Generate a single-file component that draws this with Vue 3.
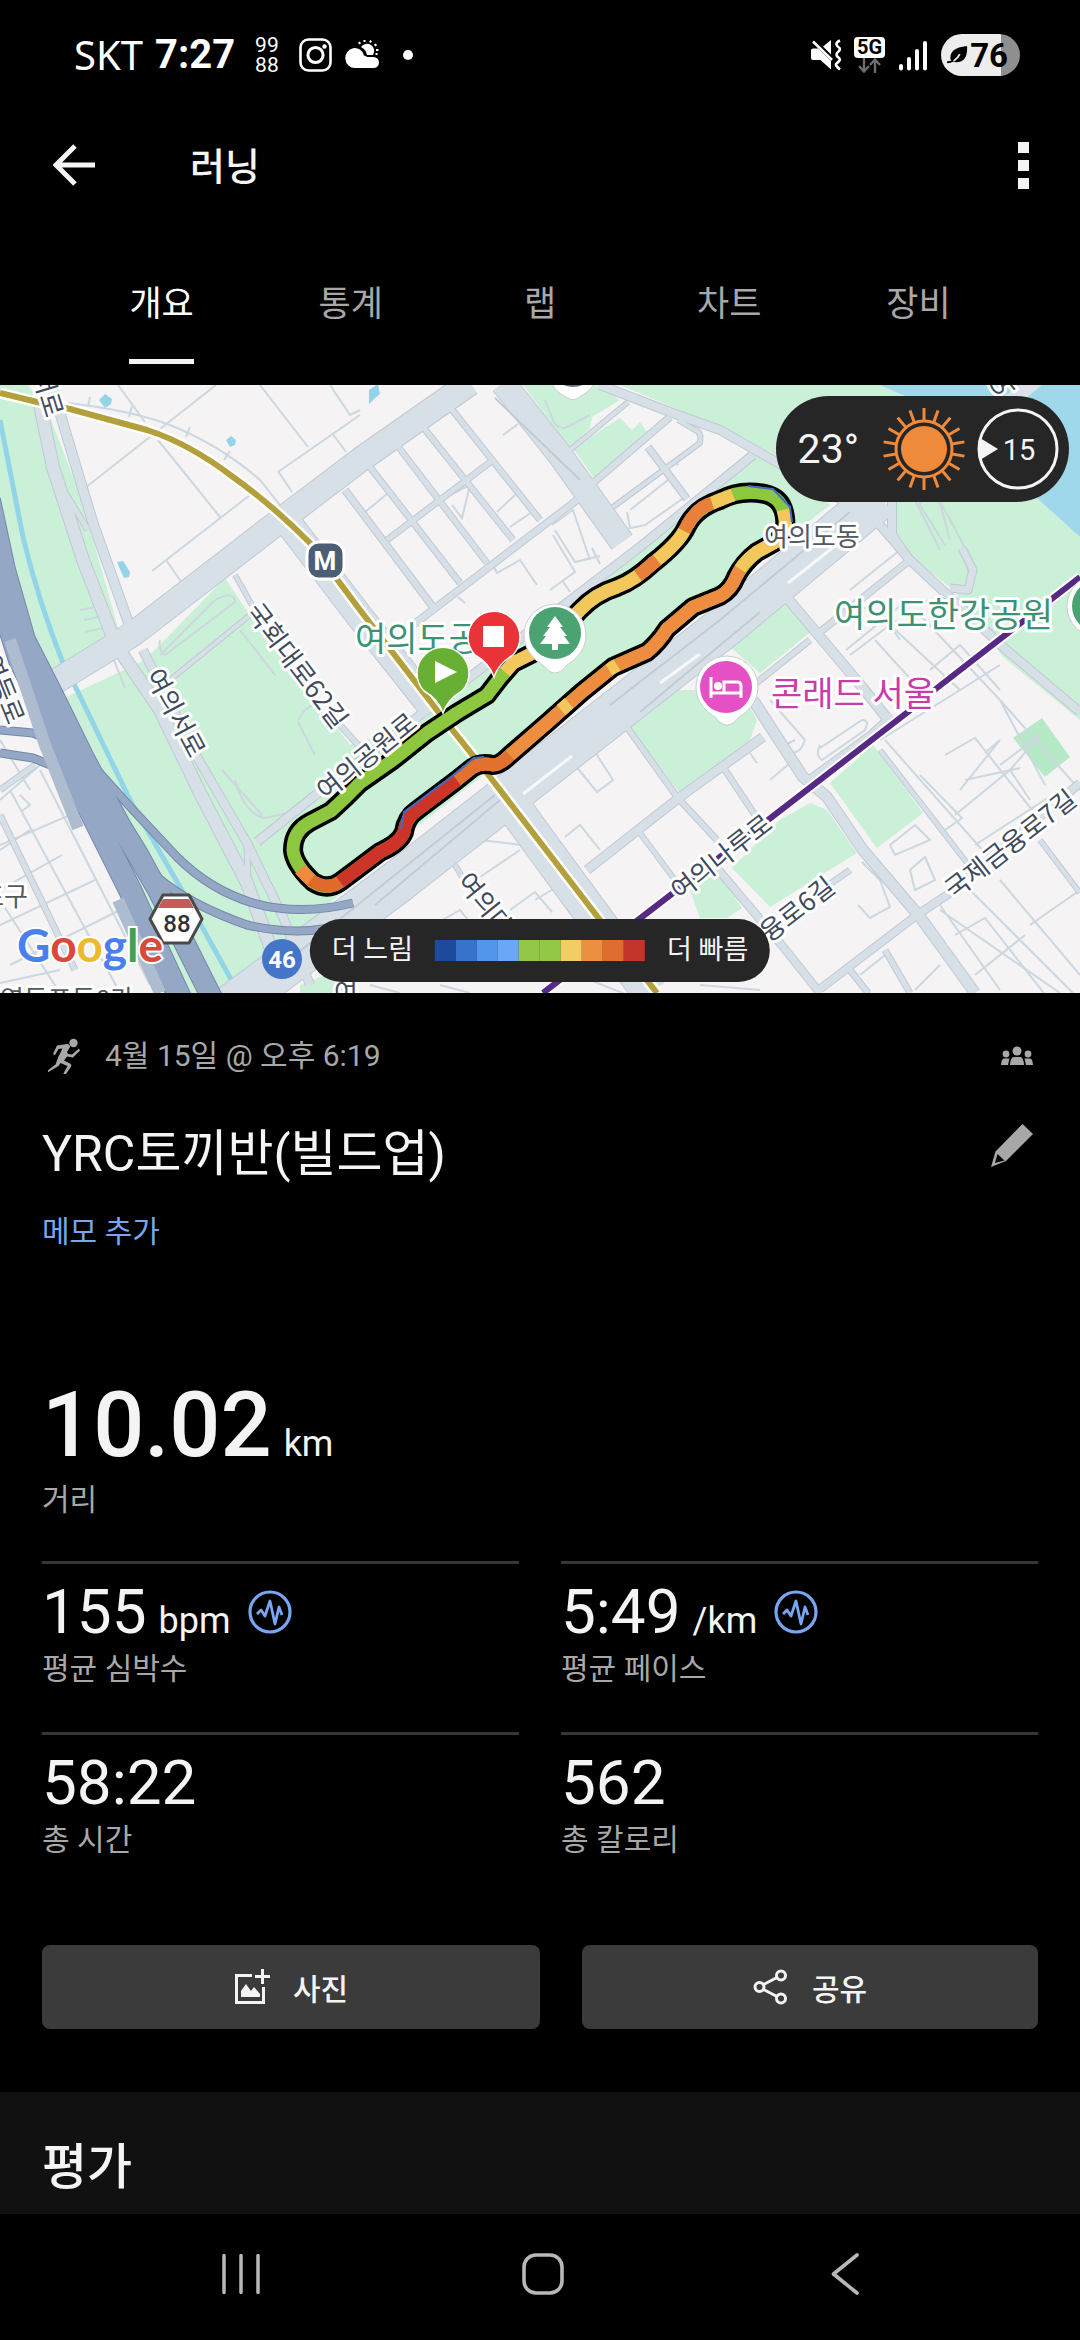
<template>
  <div class="screen">
    <div class="status-bar">
      <div class="status-left">
        <span class="carrier">SKT</span>
        <span class="clock">7:27</span>
        <span class="app-badge"><span>99</span><span>88</span></span>
        <svg class="icon-34" viewBox="0 0 34 34" fill="none" stroke="#fff">
          <rect x="1.5" y="1.5" width="30" height="31" rx="8" stroke-width="2.6" />
          <circle cx="16.5" cy="17" r="7.6" stroke-width="3" />
          <circle cx="25.5" cy="8.5" r="2.2" fill="#fff" stroke="none" />
        </svg>
        <svg class="icon-34" viewBox="0 0 34 34">
          <g stroke="#fff" stroke-width="2">
            <path d="M15 6l-1-2M19.500 4V2M25 4.500l1-2M29.500 7.500l2-1M31 12h2.500M30.500 16h2" />
          </g>
          <path d="M16 9a7 7 0 0 1 12 8h-6a11 11 0 0 0-6-8z" fill="#fff" />
          <path d="M10 30a9.500 10 0 1 1 9-12.500l3.500 1.500h6a5.500 5.500 0 0 1 0 11z" fill="#fff" />
        </svg>
        <span class="dot"></span>
      </div>
      <div class="status-right">
        <svg class="icon-32" viewBox="0 0 32 32">
          <path d="M1 11.500q0-2 2-2h5L21 22v8.500L10.500 21H3q-2 0-2-2zM13 7.500L21 1v14.500z" fill="#fff" />
          <path d="M3 2.500L22 21" stroke="#fff" stroke-width="2.600" />
          <path d="M30 1.500q-4 2-3.500 4t3 3.500q1 2-1 3.500t-2 3 2 3 1 3-3 3 3.500 6" stroke="#fff" stroke-width="2.600" fill="none" />
        </svg>
        <span class="network">
          <span class="network-type">5G</span>
          <svg viewBox="0 0 24 15" fill="none" stroke="#6d6d6d" stroke-width="2.400">
            <path d="M6 0v13M1 8l5 5.500L11 8M17 15V2M12 7l5-5.500L22 7" />
          </svg>
        </span>
        <svg class="icon-32" viewBox="0 0 32 32" stroke="#fff" stroke-width="4" stroke-linecap="round">
          <path d="M4 27v2.500M12 20v9.500M20 12v17.500" />
          <path d="M28 4v25.500" />
        </svg>
        <span class="battery">
          <svg viewBox="0 0 24 22">
            <path d="M4 17Q1 3 22 1q1 18-12 18-2 0-4-1z" />
            <path d="M1 19q8 0 13-9" stroke="#eee" stroke-width="2" fill="none" />
            <path d="M0 19q4 0 7-2" stroke="#000" stroke-width="2" fill="none" />
          </svg>
          <span>76</span>
        </span>
      </div>
    </div>

    <header class="app-bar">
      <button class="icon-button" aria-label="뒤로">
        <svg class="icon-42" viewBox="0 0 42 42" fill="none" stroke="#f4f4f4" stroke-width="5">
          <path d="M42 21H4M22 2L3 21l19 19" />
        </svg>
      </button>
      <h1>러닝</h1>
      <button class="icon-button menu" aria-label="더보기">
        <i></i><i></i><i></i>
      </button>
    </header>

    <nav class="tabs">
      <button
        v-for="tab in tabs"
        :key="tab"
        class="tab"
        :class="{ active: tab === activeTab }"
        @click="activeTab = tab"
      >
        <span>{{ tab }}</span>
      </button>
    </nav>

    <section class="map">
      <svg class="map-canvas" viewBox="0 385 1080 608">
        <rect y="385" width="1080" height="608" fill="#f5f3f4" />

        <!-- parks and water -->
        <g fill="#caf0d7">
          <path v-for="d in parks" :key="d" :d="d" />
        </g>
        <path d="M1013 738L1042 718L1070 757L1045 777z" fill="#b6eac6" />
        <path d="M880 385H1080V537L1000 465L925 405z" fill="#9fd8ea" />
        <path d="M985 410L1020 385h22L1005 415z" fill="#dde2ea" />
        <path
          d="M0 420L23 537Q38 600 63 663L77 690L130 800L180 887L233 983L240 993"
          fill="none"
          stroke="#92d5e8"
          stroke-width="5"
        />
        <g fill="#92d5e8">
          <path d="M99 400l6-6 7 5-1 5-6 4zM226 440l5-4 5 4-1 5-5 2zM117 562l6-1 7 11-1 5-5 1zM369 390l9-6 2 10-6 5-5 5z" />
        </g>

        <!-- thin lanes -->
        <g fill="none" stroke="#ccd7df" stroke-width="2">
          <path v-for="d in lanes" :key="d" :d="d" />
        </g>

        <!-- streets: edge pass, then fill pass -->
        <g fill="none" stroke="#bfc9d5" stroke-linejoin="round">
          <path v-for="r in roads" :key="r.d" :d="r.d" :stroke-width="r.w + 2" />
        </g>
        <g fill="none" stroke="#d8e0e7" stroke-linejoin="round">
          <path v-for="r in roads" :key="r.d" :d="r.d" :stroke-width="r.w" />
        </g>
        <g fill="none" stroke="#c2cad5" stroke-width="2">
          <path d="M280 967L495 795M610 705L720 620L850 512M375 905L500 800M640 712L760 612M495 398L580 480" />
        </g>
        <g fill="none" stroke="#f7f8fa" stroke-width="3">
          <path d="M523 794L572 756M660 683L700 654M788 583L840 542" />
        </g>

        <!-- expressways -->
        <g fill="none" stroke="#7388ab" stroke-linejoin="round">
          <path v-for="r in highways" :key="r.d" :d="r.d" :stroke-width="r.w + 2" />
        </g>
        <g fill="none" stroke="#94a7c4" stroke-linejoin="round">
          <path v-for="r in highways" :key="r.d" :d="r.d" :stroke-width="r.w" />
        </g>
        <path d="M10 640L45 745L78 828M118 900L160 993" fill="none" stroke="#aebccf" stroke-width="12" />

        <!-- subway lines -->
        <path :d="line9" fill="none" stroke="#fff" stroke-width="11" />
        <path :d="line9" fill="none" stroke="#b3a03c" stroke-width="6" />
        <path :d="line5" fill="none" stroke="#fff" stroke-width="10" />
        <path :d="line5" fill="none" stroke="#562984" stroke-width="6" />

        <!-- street names -->
        <g class="map-label street">
          <text text-anchor="end" transform="translate(46 419) rotate(73)">여의서로</text>
          <text transform="translate(245 612) rotate(53)">국회대로62길</text>
          <text transform="translate(145 675) rotate(62)">여의서로</text>
          <text text-anchor="end" transform="translate(8 726) rotate(68)">영등로</text>
          <text transform="translate(456 882) rotate(51)">여의대로</text>
          <text transform="translate(680 901) rotate(-38)">여의나루로</text>
          <text transform="translate(769 943) rotate(-38)">융로6길</text>
          <text transform="translate(954 900) rotate(-38)">국제금융로7길</text>
          <text transform="translate(998 400) rotate(-38)">여</text>
          <text x="334" y="1002">여</text>
        </g>
        <g class="map-label district">
          <text x="28" y="906" text-anchor="end">영등포구</text>
          <text x="0" y="1009">영등포동8가</text>
        </g>
        <g class="map-label poi">
          <text x="355" y="651">여의도공원</text>
          <text x="834" y="627">여의도한강공원</text>
          <text x="771" y="706" class="hotel">콘래드 서울</text>
        </g>

        <!-- recorded track -->
        <path :d="track" fill="none" stroke="#000" stroke-width="20" stroke-linejoin="round" />
        <path :d="track" fill="none" stroke="#8dc63f" stroke-width="13" stroke-linejoin="round" />
        <g fill="none" stroke-width="13" stroke-linejoin="round">
          <path v-for="s in segments" :key="s.d" :d="s.d" :stroke="s.color" />
        </g>
        <path
          d="M401 829L404 812L451 777L474 758L484 757M748 486L773 489L790 507L792 522"
          fill="none"
          stroke="#3b6fc6"
          stroke-width="2"
        />
        <g class="map-label street">
          <text transform="translate(326 801) rotate(-39)">여의공원로</text>
        </g>
        <g class="map-label district">
          <text x="764" y="546">여의도동</text>
        </g>

        <!-- badges -->
        <rect x="307" y="542" width="37" height="37" rx="12" fill="#4c5e73" stroke="#fff" stroke-width="3" />
        <text x="325" y="570" class="badge-m">M</text>
        <path d="M163 895h26l13 24-13 24h-26l-13-24z" fill="#fff" stroke="#4a4a4a" stroke-width="3" stroke-linejoin="round" />
        <path d="M163 899h26l5 9h-36z" fill="#c95a5a" />
        <text x="177" y="932" class="badge-88">88</text>
        <circle cx="282" cy="959" r="20" fill="#4575c9" />
        <text x="282" y="968" class="badge-46">46</text>
        <text x="17" y="962" class="google">
          <tspan fill="#4a80ee">G</tspan><tspan fill="#d9483b">o</tspan><tspan fill="#efb92e">o</tspan><tspan fill="#4a80ee">g</tspan><tspan fill="#3da256">l</tspan><tspan fill="#d9483b">e</tspan>
        </text>

        <!-- pins -->
        <g stroke="#c9ced3">
          <path d="M548 375Q553 391 566 397Q573 403 581 396Q594 389 598 375z" fill="#fff" />
          <circle cx="573" cy="362" r="25" fill="#6d747c" stroke="none" />
          <path d="M555 673q-6 0-12-8-8-4-14-13a31 31 0 1 1 52 0q-6 9-14 13-6 8-12 8z" fill="#fff" />
          <path d="M727 725q-6 0-12-8-8-4-14-13a31 31 0 1 1 52 0q-6 9-14 13-6 8-12 8z" fill="#fff" />
          <circle cx="1098" cy="606" r="31" fill="#fff" />
        </g>
        <circle cx="1098" cy="606" r="26" fill="#4ba374" />
        <circle cx="555" cy="633" r="26" fill="#4ba374" />
        <path d="M555 616l8 11h-3l7 9h-3l6 8h-12v6h-6v-6h-12l6-8h-3l7-9h-3z" fill="#fff" />
        <circle cx="726" cy="687" r="26" fill="#e650c5" />
        <path d="M711 677v21M711 693h30M741 698v-12q0-4-4-4h-13v10" fill="none" stroke="#fff" stroke-width="3" />
        <circle cx="718" cy="686" r="4" fill="#fff" />
        <path d="M494 677q-5-14-19-22a26 26 0 1 1 38 0q-14 8-19 22z" fill="#ea3338" stroke="#fff" stroke-width="1.500" />
        <rect x="483" y="626" width="21" height="21" fill="#fff" />
        <path d="M443 713q-5-14-19-22a26 26 0 1 1 38 0q-14 8-19 22z" fill="#68b034" stroke="#fff" stroke-width="1.500" />
        <path d="M435 661v22l22-11z" fill="#fff" />
      </svg>

      <div class="weather">
        <span class="temperature">23°</span>
        <svg class="weather-icon" viewBox="-41 -41 82 82">
          <g stroke="#ef8a3a" stroke-width="3">
            <path v-for="n in 18" :key="n" d="M0 -27V-41" :transform="`rotate(${n * 20})`" />
          </g>
          <circle r="28" fill="#262626" stroke="#ef8a3a" stroke-width="3" />
          <circle r="23" fill="#ef8a3a" />
        </svg>
        <svg class="weather-icon" viewBox="-41 -41 82 82">
          <circle r="39" fill="none" stroke="#f4f4f4" stroke-width="3" />
          <path d="M-38 -11L-20 0L-38 11z" fill="#f4f4f4" />
          <text x="1" y="11" class="wind">15</text>
        </svg>
      </div>

      <div class="legend">
        <span>더 느림</span>
        <div class="scale">
          <i v-for="(color, i) in scale" :key="i" :style="{ background: color }"></i>
        </div>
        <span>더 빠름</span>
      </div>
    </section>

    <main class="activity">
      <div class="meta">
        <svg class="runner" viewBox="0 0 32 36" fill="#a8a8a8">
          <circle cx="25.500" cy="5" r="4.200" />
          <path d="M9 7.500l10-1.500q3 0 3 3l-3 5 1 2 4 .5 7-6 1 2-7 7-6-1-3 4 6 3q2 1 1 3l-6 9-2-1 4.500-8.500-7-3-2 3-11 6.500-.5-1.500 8.500-6.500 3-8 4-8-4 .5-3.500 6-2-1z" />
        </svg>
        <span>4월 15일 @ 오후 6:19</span>
        <svg class="group" viewBox="0 0 34 20" fill="#a8a8a8">
          <circle cx="17" cy="5" r="4.500" />
          <circle cx="6" cy="8" r="3.400" />
          <circle cx="28" cy="8" r="3.400" />
          <path d="M10 19q.5-8 4-8h6q3.500 0 4 8zM1 19q.5-6.500 3-6.500h5.500L8 19zM33 19q-.5-6.500-3-6.500h-5.500L26 19z" />
        </svg>
      </div>

      <div class="title-row">
        <h2>YRC토끼반(빌드업)</h2>
        <button class="icon-button" aria-label="이름 편집">
          <svg class="pencil" viewBox="0 0 44 44">
            <path d="M32.500 0L43 10 16 37 1 43 5.500 27.500z" fill="#a8a8a8" />
            <path d="M7.500 30l7 6.500-9.500 2.500z" fill="#000" />
          </svg>
        </button>
      </div>
      <a href="#" class="memo">메모 추가</a>

      <div class="distance">
        <div class="value-row">
          <strong>10.02</strong>
          <span class="unit">km</span>
        </div>
        <span class="label">거리</span>
      </div>

      <div class="stats">
        <div v-for="stat in stats" :key="stat.label" class="stat">
          <div class="value-line">
            <div class="value-row">
              <span class="value">{{ stat.value }}</span>
              <span v-if="stat.unit" class="unit">{{ stat.unit }}</span>
            </div>
            <svg v-if="stat.unit" class="pulse" viewBox="0 0 44 44" fill="none" stroke="#78a6f2">
              <circle cx="22" cy="22" r="20" stroke-width="3.200" />
              <path d="M9 24l4-4 4 6 5-15 5 23 4-17 3 8" stroke-width="2.800" stroke-linejoin="round" />
            </svg>
          </div>
          <span class="label">{{ stat.label }}</span>
        </div>
      </div>

      <div class="actions">
        <button class="action photo">
          <svg viewBox="0 0 36 36" fill="none" stroke="#f4f4f4" stroke-width="3">
            <path d="M18 6.500H2.500v27h27V18M28.500 0v15M21 7.500h15" />
            <path d="M7 28v-6l5-7 5 7 3-4 6 7v3z" fill="#f4f4f4" stroke="none" />
          </svg>
          <span>사진</span>
        </button>
        <button class="action share">
          <svg viewBox="0 0 36 36" fill="none" stroke="#f4f4f4" stroke-width="3">
            <circle cx="6.500" cy="18" r="4.500" />
            <circle cx="28" cy="6.500" r="4.500" />
            <circle cx="28" cy="29.500" r="4.500" />
            <path d="M10.500 15.500L24 8.500M10.500 20.500L24 27.500" />
          </svg>
          <span>공유</span>
        </button>
      </div>
    </main>

    <section class="rating">
      <h2>평가</h2>
    </section>

    <footer class="nav-bar">
      <button class="icon-button" aria-label="최근 앱">
        <svg class="icon-42" viewBox="0 0 42 42" stroke="#b8b8b8" stroke-width="3.500" stroke-linecap="round">
          <path d="M4 2.500v37M21 2.500v37" />
          <path d="M38 2.500v37" />
        </svg>
      </button>
      <button class="icon-button" aria-label="홈">
        <svg class="icon-42" viewBox="0 0 42 42" fill="none" stroke="#b8b8b8" stroke-width="3.600">
          <rect x="2" y="2" width="38" height="38" rx="12" />
        </svg>
      </button>
      <button class="icon-button" aria-label="뒤로 가기">
        <svg class="icon-42" viewBox="0 0 42 42" fill="none" stroke="#b8b8b8" stroke-width="3.600" stroke-linecap="round" stroke-linejoin="round">
          <path d="M33 2L9.500 21 33 40" />
        </svg>
      </button>
    </footer>
  </div>
</template>

<script setup>
import { ref } from "vue";

const tabs = ["개요", "통계", "랩", "차트", "장비"];
const activeTab = ref("개요");

const stats = [
  { value: "155", unit: "bpm", label: "평균 심박수" },
  { value: "5:49", unit: "/km", label: "평균 페이스" },
  { value: "58:22", unit: "", label: "총 시간" },
  { value: "562", unit: "", label: "총 칼로리" },
];

const scale = [
  "#1c4b9c",
  "#3772cb",
  "#5296ec",
  "#6aa8f7",
  "#92c846",
  "#92c846",
  "#f1cd63",
  "#eb8f41",
  "#de6d2f",
  "#c1352b",
];

const parks = [
  "M0 385H28L50 417L82 500L118 628L50 690L60 700L145 660L225 578L245 608L350 745L420 722L753 452L790 470L830 505L400 840L230 993H170L0 600z",
  "M523 385H600L620 400L592 417L590 428L570 448z",
  "M573 448L620 418L632 430L640 422L648 434L594 478z",
  "M620 385H885L960 430L1080 537V720L1003 657L953 590L897 545L893 500L850 500L770 452L720 427z",
  "M730 647L787 603L813 630L760 673z",
  "M627 727L672 690H740L757 720L750 740L680 793z",
  "M830 783L873 745L923 813L877 848z",
  "M732 868L780 820L810 803L827 810L857 853L770 907z",
  "M690 890L718 872L742 908L727 918L700 918z",
  "M300 985L325 975L350 993H300z",
];

const lanes = [
  "M68 403Q130 410 170 425Q220 445 260 480L280 505",
  "M118 385L145 422M158 440L220 517M216 385L85 488M260 385L308 447M330 385L350 415L360 410M278 472L360 415M152 571L250 495M166 560L182 583M332 433L346 452M278 471L292 492",
  "M90 397l-2 10M132 406l-3 11M190 427l-4 10M230 451l-6 9",
  "M160 655L215 600Q235 590 235 602L165 655Q158 650 160 640M240 630L275 675M112 655L125 688M80 610L100 606M84 620L102 616M85 632L104 628",
  "M545 400L553 420Q556 428 565 428L590 415M503 435L518 424M365 512L387 494M450 495L470 485L462 518L452 505M497 512L515 495M510 527L532 512M552 525L573 510L590 560M592 548l8 16M555 530L575 562L600 556",
  "M493 565L497 573L520 560L537 585M550 590L575 572L553 535M458 597L465 603M562 580L570 592",
  "M627 512L630 528L645 525L688 495M675 462L678 465M668 480L630 510",
  "M915 440L920 505L945 545M925 448L950 540M905 480L940 550M900 440Q930 480 965 548L970 590",
  "M760 540l8 14 14-9M850 590L900 550M845 600L905 625",
  "M846 650L905 602L940 600M875 640L925 695M890 625L960 690M920 615L1000 700M880 610L900 640M850 655L890 625M930 670L960 645L1000 690",
  "M575 765L597 792L613 780L595 752M565 837L580 825L600 850M520 850L480 877M480 840L522 845M510 910L535 892L552 912M535 900L560 885",
  "M820 745Q815 755 822 760L865 730Q870 720 862 720L820 748M770 700L805 740Q800 755 790 752L755 710M885 740L1000 870M945 755L975 738L1040 820M985 753L1000 740L960 790M965 780L1020 768M1000 765L1040 735L1010 770",
  "M880 740L1000 665M1000 700L1045 785M920 775L962 818L945 830M955 815L1010 770L1030 800M975 845L1060 790M1000 700L1080 790",
  "M770 780L790 763M750 753L757 763M785 745L795 740",
  "M890 845L915 825L930 840L895 855zM910 870L925 857L935 880L915 890z",
  "M940 910L1060 993M960 880L1080 1000M955 935L985 918L1065 1020M1000 880L1080 975M1030 925L1080 890M975 975L1025 935M940 905L1000 990M915 990L940 965",
  "M858 905L870 918L890 907L880 880L862 862M860 975L885 955M855 975L870 993",
  "M0 800L40 765M0 845L105 800M10 790L120 993M40 770L150 985M0 925L95 880M10 965L130 905M0 740L30 790M20 795l10 10-8 6M62 855L0 890M60 993L0 900M30 830L0 850",
  "M390 950L460 910L500 960M540 960L640 1000M700 985L760 990M370 985L400 993M440 985L470 993M0 983L60 970",
  "M235 780Q245 815 265 818L300 810M298 720L305 710L320 700M298 722L315 755M222 770L262 815",
];

const roads = [
  { w: 5, d: "M450 407L540 520" },
  { w: 5, d: "M423 427L513 540" },
  { w: 5, d: "M397 445L487 563" },
  { w: 5, d: "M370 467L460 583" },
  { w: 6, d: "M345 490L433 607" },
  { w: 5, d: "M387 540L493 460" },
  { w: 6, d: "M413 625L577 500" },
  { w: 6, d: "M593 483L670 417" },
  { w: 6, d: "M648 447L687 499" },
  { w: 4, d: "M613 507L700 443Q702 432 695 430L678 420" },
  { w: 4, d: "M570 450L628 402" },
  { w: 8, d: "M600 385L670 412L720 430L773 460L850 505" },
  { w: 8, d: "M257 842L313 797L640 547L753 455" },
  { w: 12, d: "M40 405L53 467L83 560L116 645L160 710L200 793L247 883L275 960" },
  { w: 5, d: "M48 465L88 530" },
  { w: 9, d: "M52 385L62 420L93 523L130 627" },
  { w: 8, d: "M143 650L197 757L247 843L283 917L310 985" },
  { w: 5, d: "M247 845L248 885L275 955" },
  { w: 4, d: "M235 575L252 605M170 680L250 615" },
  { w: 5, d: "M340 725L358 745" },
  { w: 24, d: "M45 688L133 634L273 526L360 460L470 383" },
  { w: 26, d: "M280 512L360 617L430 705" },
  { w: 24, d: "M503 383L560 455L622 542" },
  { w: 42, d: "M215 1018L400 880L560 755L720 630L880 497" },
  { w: 34, d: "M505 795L545 850L600 925L650 993" },
  { w: 9, d: "M783 593L863 688L890 722" },
  { w: 8, d: "M867 510L910 560L1003 647L1080 712" },
  { w: 8, d: "M892 500L892 535L908 558" },
  { w: 7, d: "M950 588L968 590L973 570L962 548" },
  { w: 6, d: "M820 632L910 560" },
  { w: 5, d: "M720 712L810 640" },
  { w: 10, d: "M753 700L803 777L827 797L863 850L920 917L975 993" },
  { w: 6, d: "M808 780L870 735L892 715" },
  { w: 8, d: "M587 870L680 797L763 737" },
  { w: 5, d: "M627 727L677 797L717 840M723 767L765 830" },
  { w: 7, d: "M710 860L780 943L820 993" },
  { w: 4, d: "M640 833L675 880M455 865L470 890" },
  { w: 7, d: "M820 989L917 915L947 895L1080 783" },
  { w: 4, d: "M880 750L967 863M1040 840L1080 893" },
  { w: 5, d: "M850 870L800 905M885 950L910 993M850 970L868 993" },
  { w: 5, d: "M0 790L35 765M0 815L75 970" },
];

const highways = [
  { w: 7, d: "M0 753L33 758L63 770L97 793Q130 820 157 877Q190 905 247 925Q290 935 330 928" },
  { w: 7, d: "M0 730L33 733L67 747L97 770L133 810L177 857Q210 890 253 903Q300 916 353 903" },
  { w: 22, d: "M-12 560L20 660L35 690L60 750L100 830L130 890L180 998" },
  { w: 20, d: "M-10 500L5 570L25 640L53 695L85 760L120 825L158 890L212 998" },
];

const line9 =
  "M0 393L37 402L70 409L147 430Q190 444 233 477Q270 503 310 543L360 610L443 718L490 777L600 920L657 993";
const line5 = "M1080 577L937 688L908 712L768 820L638 920L543 993";

const track =
  "M487 695L457 713L427 733L393 760L360 783L346 797L331 811L310 822Q293 831 293 850Q294 864 313 882Q327 891 340 882L360 867L380 852Q400 843 404 832Q406 818 416 811L457 780L472 768Q480 762 493 765Q500 765 510 755L547 723L582 692L613 667L647 652Q658 643 667 629L693 607L720 596Q731 590 736 577Q744 562 757 552L777 541Q787 532 785 518Q783 498 765 494Q740 489 720 500Q696 508 687 526Q680 542 653 563Q635 580 617 587Q595 594 580 610L545 647L513 663L500 678Z";

const segments = [
  { color: "#f08a3e", d: "M300 869Q306 876 313 882" },
  { color: "#df6a2b", d: "M311 880Q327 891 340 882" },
  { color: "#cd3427", d: "M340 882L360 867L380 852Q400 843 404 832Q406 818 416 811L457 780" },
  { color: "#e2702f", d: "M457 780L472 768Q480 762 493 765Q500 765 510 755" },
  { color: "#ee8d40", d: "M510 755L547 723L582 692L613 667L647 652Q658 643 667 629L693 607L720 596Q731 590 736 577L740 569" },
  { color: "#f2c75b", d: "M561 710L569 703M609 670L617 665" },
  { color: "#f2c75b", d: "M740 569Q746 560 757 552L777 541Q787 532 785 518L783 510" },
  { color: "#f2c75b", d: "M733 495L720 500" },
  { color: "#f2c75b", d: "M722 499Q716 501 711 504" },
  { color: "#e97f38", d: "M712 503Q696 508 687 526L684 531" },
  { color: "#f2c75b", d: "M684 531Q678 543 657 560" },
  { color: "#e97f38", d: "M657 560Q649 567 638 576" },
  { color: "#f2c75b", d: "M638 576Q628 583 617 587Q595 594 580 610L545 647L513 663L505 672" },
];
</script>

<style>
body {
  background: #000;
}
</style>

<style scoped>
.screen {
  min-height: 100vh;
  display: flex;
  flex-direction: column;
  background: #000;
  color: #f4f4f4;
  font-family: Roboto, "Noto Sans CJK KR", sans-serif;
}

h1,
h2 {
  margin: 0;
  font-weight: 400;
}

button {
  padding: 0;
  border: none;
  background: none;
  color: inherit;
  font-family: inherit;
  cursor: pointer;
}

svg {
  display: block;
  flex-shrink: 0;
}

.icon-button {
  display: flex;
}

.icon-32 {
  width: 32px;
  height: 32px;
}

.icon-34 {
  width: 34px;
  height: 34px;
}

.icon-42 {
  width: 42px;
  height: 42px;
}

.status-bar {
  display: flex;
  align-items: center;
  justify-content: space-between;
  height: 110px;
  padding: 0 60px 0 74px;
  color: #fff;
}

.status-left,
.status-right {
  display: flex;
  align-items: center;
  gap: 12px;
}

.carrier {
  font-family: "Noto Sans", sans-serif;
  font-size: 40px;
  line-height: 48px;
}

.clock {
  font-size: 40px;
  font-weight: 700;
  line-height: 48px;
  margin-right: 8px;
}

.app-badge {
  display: flex;
  flex-direction: column;
  margin-right: 8px;
  font-size: 21px;
  line-height: 20px;
}

.dot {
  width: 10px;
  height: 10px;
  margin-left: 12px;
  border-radius: 50%;
  background: #fff;
}

.network {
  display: flex;
  flex-direction: column;
  align-items: center;
}

.network svg {
  width: 24px;
  height: 15px;
}

.network-type {
  padding: 0 3px;
  border-radius: 4px;
  background: #fff;
  color: #000;
  font-size: 20px;
  font-weight: 700;
  line-height: 21px;
}

.battery {
  display: flex;
  align-items: center;
  gap: 1px;
  height: 42px;
  padding: 0 12px 0 6px;
  border-radius: 21px;
  background: linear-gradient(to right, #ededed 76%, #8f8f8f 76%);
  color: #000;
  font-size: 33px;
  font-weight: 700;
}

.battery svg {
  width: 22px;
  height: 20px;
}

.app-bar {
  display: flex;
  align-items: center;
  height: 110px;
  padding: 0 51px 0 53px;
}

.app-bar h1 {
  flex: 1;
  margin-left: 95px;
  padding-top: 4px;
  font-size: 38px;
  font-weight: 500;
  line-height: 48px;
}

.menu {
  flex-direction: column;
  gap: 7px;
}

.menu i {
  width: 11px;
  height: 11px;
  background: #f4f4f4;
}

.tabs {
  display: flex;
  padding: 0 67px 21px;
}

.tab {
  flex: 1;
  display: flex;
  justify-content: center;
  color: #a8a8a8;
  font-size: 35px;
}

.tab span {
  padding: 60px 0 29px;
  border-bottom: 5px solid transparent;
  line-height: 50px;
}

.tab.active {
  color: #fff;
}

.tab.active span {
  border-color: #f4f4f4;
}

.map {
  position: relative;
}

.map-canvas {
  width: 100%;
  height: auto;
}

.map-label {
  font-family: "Noto Sans CJK KR", sans-serif;
  stroke: #fff;
  stroke-linejoin: round;
  stroke-width: 6px;
  paint-order: stroke;
}

.street {
  font-size: 26px;
  fill: #3f4b5c;
}

.district {
  font-size: 26px;
  fill: #55595f;
}

.poi {
  font-size: 34px;
  fill: #3c9272;
}

.hotel {
  fill: #c93ba8;
}

.badge-m,
.badge-88,
.badge-46 {
  font-size: 26px;
  font-weight: 700;
  text-anchor: middle;
  fill: #fff;
}

.badge-88 {
  font-size: 24px;
  font-weight: 500;
  fill: #333;
}

.badge-46 {
  font-size: 24px;
}

.google {
  font-family: Lato, sans-serif;
  font-size: 46px;
  font-weight: 700;
  stroke: #fff;
  stroke-width: 4px;
  paint-order: stroke;
}

.weather {
  position: absolute;
  top: 11px;
  right: 11px;
  display: flex;
  align-items: center;
  gap: 12px;
  padding: 12px 10px 12px 22px;
  border-radius: 53px;
  background: #262626;
}

.temperature {
  margin-right: 12px;
  font-size: 41px;
}

.weather-icon {
  width: 82px;
  height: 82px;
}

.wind {
  font-size: 29px;
  text-anchor: middle;
  fill: #f4f4f4;
}

.legend {
  position: absolute;
  bottom: 11px;
  left: 50%;
  transform: translateX(-50%);
  display: flex;
  align-items: center;
  gap: 22px;
  padding: 0 22px;
  border-radius: 32px;
  background: #262626;
  font-size: 27px;
  line-height: 63px;
  white-space: nowrap;
}

.scale {
  display: flex;
}

.scale i {
  width: 21px;
  height: 21px;
}

.activity {
  padding: 39px 42px 63px;
}

.meta {
  display: flex;
  align-items: center;
  color: #a8a8a8;
  font-size: 30px;
  line-height: 48px;
}

.runner {
  width: 32px;
  height: 36px;
  margin: 0 25px 0 6px;
}

.group {
  width: 34px;
  height: 20px;
  margin: 0 4px 0 auto;
}

.title-row {
  display: flex;
  align-items: center;
  justify-content: space-between;
  margin-top: 36px;
}

.title-row h2 {
  font-size: 50px;
  line-height: 76px;
}

.pencil {
  width: 44px;
  height: 44px;
  margin: 0 4px 16px;
}

.memo {
  display: inline-block;
  margin-top: 20px;
  color: #78a6f2;
  font-size: 30px;
  line-height: 40px;
  text-decoration: none;
  vertical-align: top;
}

.distance {
  margin-top: 124px;
}

.distance .value-row {
  line-height: 100px;
  margin-bottom: 4px;
}

.distance strong {
  font-size: 90px;
  font-weight: 500;
}

.value-row {
  display: flex;
  align-items: baseline;
  gap: 12px;
}

.unit {
  font-size: 36px;
  line-height: 36px;
}

.label {
  display: block;
  color: #a8a8a8;
  font-size: 30px;
  line-height: 40px;
}

.stats {
  display: grid;
  grid-template-columns: 1fr 1fr;
  column-gap: 42px;
  margin-top: 41px;
}

.stat {
  padding: 18px 0 43px;
  border-top: 3px solid #363636;
}

.value-line {
  display: flex;
  align-items: center;
  gap: 17px;
  margin-bottom: 7px;
  line-height: 60px;
}

.value {
  font-size: 62px;
}

.pulse {
  width: 44px;
  height: 44px;
}

.actions {
  display: flex;
  gap: 42px;
  margin-top: 42px;
}

.action {
  flex: 456;
  display: flex;
  align-items: center;
  justify-content: center;
  gap: 23px;
  height: 84px;
  border-radius: 8px;
  background: #3b3b3b;
  font-size: 30px;
  font-weight: 500;
}

.action.photo {
  flex: 498;
}

.action svg {
  width: 36px;
  height: 36px;
}

.rating {
  padding: 46px 42px 16px;
  background: #111;
}

.rating h2 {
  font-size: 49px;
  font-weight: 500;
  line-height: 60px;
}

.nav-bar {
  display: flex;
  align-items: center;
  justify-content: space-around;
  height: 120px;
  padding: 0 84px 6px 90px;
}
</style>
